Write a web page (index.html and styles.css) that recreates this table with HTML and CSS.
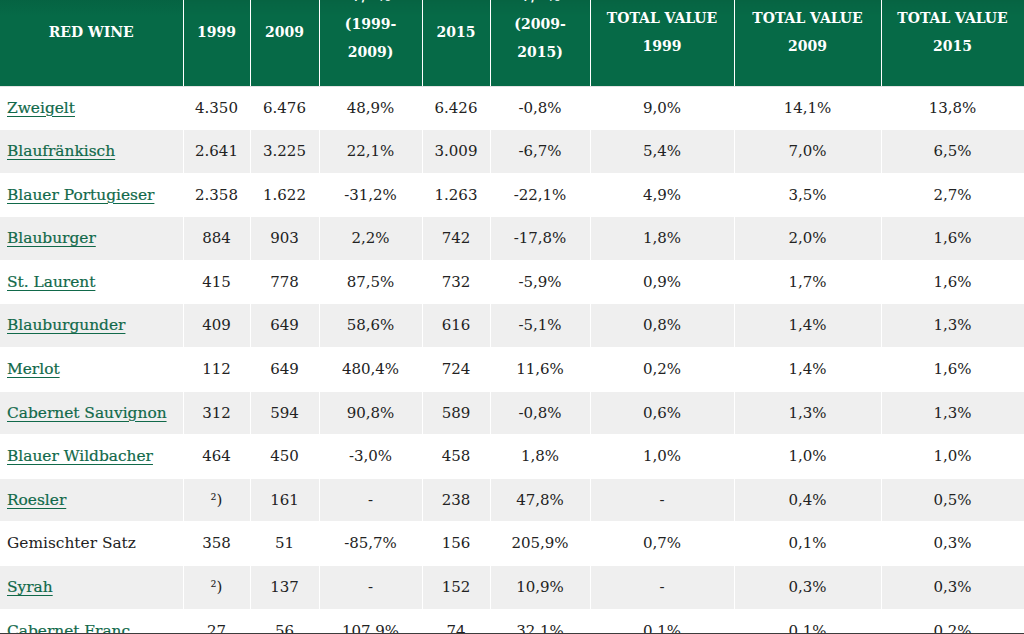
FILE: index.html
```html
<!DOCTYPE html>
<html lang="de">
<head>
<meta charset="utf-8">
<title>Red Wine</title>
<link rel="stylesheet" href="styles.css">
</head>
<body>
<table class="wine-table">
  <colgroup>
    <col class="c-name"><col class="c-y1"><col class="c-y2"><col class="c-p1"><col class="c-y3"><col class="c-p2"><col class="c-t1"><col class="c-t2"><col class="c-t3">
  </colgroup>
  <thead>
    <tr>
      <th>RED WINE</th>
      <th>1999</th>
      <th>2009</th>
      <th class="th-pct">+/- %<br>(1999-<br>2009)</th>
      <th>2015</th>
      <th class="th-pct">+/- %<br>(2009-<br>2015)</th>
      <th>TOTAL VALUE<br>1999</th>
      <th>TOTAL VALUE<br>2009</th>
      <th>TOTAL VALUE<br>2015</th>
    </tr>
  </thead>
  <tbody>
    <tr><td><a href="#">Zweigelt</a></td><td>4.350</td><td>6.476</td><td>48,9%</td><td>6.426</td><td>-0,8%</td><td>9,0%</td><td>14,1%</td><td>13,8%</td></tr>
    <tr><td><a href="#">Blaufränkisch</a></td><td>2.641</td><td>3.225</td><td>22,1%</td><td>3.009</td><td>-6,7%</td><td>5,4%</td><td>7,0%</td><td>6,5%</td></tr>
    <tr><td><a href="#">Blauer Portugieser</a></td><td>2.358</td><td>1.622</td><td>-31,2%</td><td>1.263</td><td>-22,1%</td><td>4,9%</td><td>3,5%</td><td>2,7%</td></tr>
    <tr><td><a href="#">Blauburger</a></td><td>884</td><td>903</td><td>2,2%</td><td>742</td><td>-17,8%</td><td>1,8%</td><td>2,0%</td><td>1,6%</td></tr>
    <tr><td><a href="#">St. Laurent</a></td><td>415</td><td>778</td><td>87,5%</td><td>732</td><td>-5,9%</td><td>0,9%</td><td>1,7%</td><td>1,6%</td></tr>
    <tr><td><a href="#">Blauburgunder</a></td><td>409</td><td>649</td><td>58,6%</td><td>616</td><td>-5,1%</td><td>0,8%</td><td>1,4%</td><td>1,3%</td></tr>
    <tr><td><a href="#">Merlot</a></td><td>112</td><td>649</td><td>480,4%</td><td>724</td><td>11,6%</td><td>0,2%</td><td>1,4%</td><td>1,6%</td></tr>
    <tr><td><a href="#">Cabernet Sauvignon</a></td><td>312</td><td>594</td><td>90,8%</td><td>589</td><td>-0,8%</td><td>0,6%</td><td>1,3%</td><td>1,3%</td></tr>
    <tr><td><a href="#">Blauer Wildbacher</a></td><td>464</td><td>450</td><td>-3,0%</td><td>458</td><td>1,8%</td><td>1,0%</td><td>1,0%</td><td>1,0%</td></tr>
    <tr><td><a href="#">Roesler</a></td><td>²)</td><td>161</td><td>-</td><td>238</td><td>47,8%</td><td>-</td><td>0,4%</td><td>0,5%</td></tr>
    <tr><td>Gemischter Satz</td><td>358</td><td>51</td><td>-85,7%</td><td>156</td><td>205,9%</td><td>0,7%</td><td>0,1%</td><td>0,3%</td></tr>
    <tr><td><a href="#">Syrah</a></td><td>²)</td><td>137</td><td>-</td><td>152</td><td>10,9%</td><td>-</td><td>0,3%</td><td>0,3%</td></tr>
    <tr><td><a href="#">Cabernet Franc</a></td><td>27</td><td>56</td><td>107,9%</td><td>74</td><td>32,1%</td><td>0,1%</td><td>0,1%</td><td>0,2%</td></tr>
  </tbody>
</table>
<div class="window-edge"></div>
</body>
</html>
```
FILE: styles.css
```css
html, body {
  margin: 0;
  padding: 0;
  background: #fff;
  overflow: hidden;
}
body {
  font-family: "DejaVu Serif", "Liberation Serif", serif;
  color: #222;
}
.wine-table {
  width: 1024px;
  margin-top: -22px;
  border-collapse: collapse;
  table-layout: fixed;
}
.c-name { width: 183px; }
.c-y1 { width: 67px; }
.c-y2 { width: 69px; }
.c-p1 { width: 103px; }
.c-y3 { width: 68px; }
.c-p2 { width: 100px; }
.c-t1 { width: 144px; }
.c-t2 { width: 147px; }
.c-t3 { width: 143px; }

.wine-table thead th {
  height: 108px;
  box-sizing: border-box;
  padding: 0 4px;
  background: linear-gradient(#055a3c 0%, #066a47 35%, #066a47 100%);
  color: #fff;
  font-size: 14px;
  font-weight: bold;
  line-height: 28px;
  text-align: center;
  vertical-align: middle;
  border-left: 1px solid #fff;
  border-right: 1px solid #fff;
  border-bottom: 1px solid #e4e4e4;
}
.wine-table thead th:first-child { border-left: 0; }
.wine-table thead th.th-pct {
  vertical-align: top;
  padding-top: 4px;
}
.wine-table tbody td {
  padding: 8px 7px;
  font-size: 15px;
  line-height: 26.6px;
  text-align: center;
  white-space: nowrap;
  border-top: 1px solid #fff;
  border-left: 1px solid #fff;
  border-right: 1px solid #fff;
}
.wine-table tbody td:first-child {
  text-align: left;
  border-left: 0;
  font-size: 15.4px;
}
.wine-table tbody tr:nth-child(even) td {
  background: #efefef;
}
.wine-table a {
  color: #11694a;
  -webkit-text-stroke: 0.2px #11694a;
  text-decoration: underline;
  text-decoration-thickness: 1.2px;
  text-underline-offset: 3px;
}
.window-edge {
  position: fixed;
  left: 0;
  right: 0;
  bottom: 0;
  height: 1px;
  background: #3c3c3c;
}
```
